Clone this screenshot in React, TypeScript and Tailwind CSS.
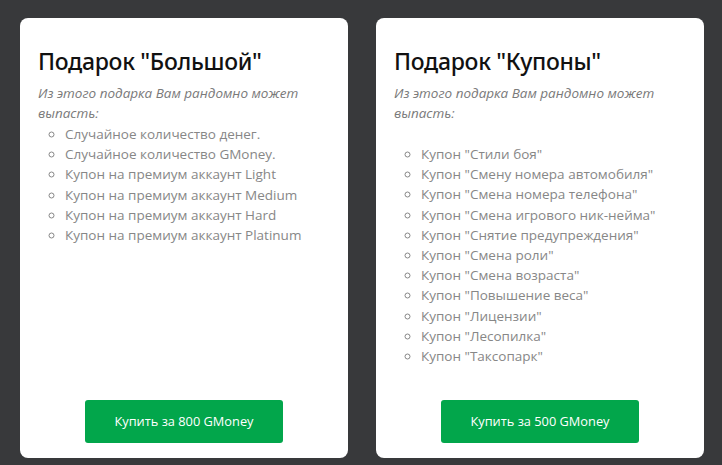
type Gift = { title: string; items: string[]; price: number; gap?: boolean };

const gifts: Gift[] = [
  {
    title: 'Подарок "Большой"',
    items: [
      "Случайное количество денег.",
      "Случайное количество GMoney.",
      "Купон на премиум аккаунт Light",
      "Купон на премиум аккаунт Medium",
      "Купон на премиум аккаунт Hard",
      "Купон на премиум аккаунт Platinum",
    ],
    price: 800,
  },
  {
    title: 'Подарок "Купоны"',
    items: [
      'Купон "Стили боя"',
      'Купон "Смену номера автомобиля"',
      'Купон "Смена номера телефона"',
      'Купон "Смена игрового ник-нейма"',
      'Купон "Снятие предупреждения"',
      'Купон "Смена роли"',
      'Купон "Смена возраста"',
      'Купон "Повышение веса"',
      'Купон "Лицензии"',
      'Купон "Лесопилка"',
      'Купон "Таксопарк"',
    ],
    price: 500,
    gap: true,
  },
];

function GiftCard({ gift }: { gift: Gift }) {
  return (
    <div className="flex h-[440px] w-[328px] flex-col rounded-lg bg-white px-[18px] pt-[28px] pb-[15px]">
      <h2 className="font-['Noto_Sans',sans-serif] text-[23px] leading-[30px] font-medium tracking-[-0.3px] text-[#111]">
        {gift.title}
      </h2>
      <p className="mt-[7px] font-['Open_Sans',sans-serif] text-[13.5px] leading-[20px] text-[#7a7a7a] italic">
        Из этого подарка Вам рандомно может выпасть:
      </p>
      {gift.gap && <div className="h-[20px]" />}
      <ul className="mt-[1px] list-[circle] pl-[27px] font-['Open_Sans',sans-serif] text-[13.5px] leading-[20.2px] text-[#878787]">
        {gift.items.map((item) => (
          <li key={item}>{item}</li>
        ))}
      </ul>
      <button className="mx-auto mt-auto h-[43px] w-[198px] rounded-[3px] bg-[#02a64b] font-['Open_Sans',sans-serif] text-[12.8px] text-white">
        Купить за {gift.price} GMoney
      </button>
    </div>
  );
}

export default function App() {
  return (
    <div className="flex min-h-[465px] gap-[28px] bg-[#38393b] pt-[18px] pl-[20px]">
      {gifts.map((g) => (
        <GiftCard key={g.title} gift={g} />
      ))}
    </div>
  );
}
